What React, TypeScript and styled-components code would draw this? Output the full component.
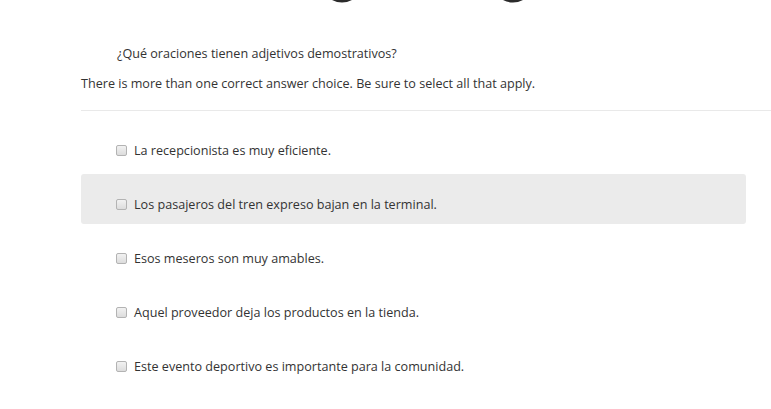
import React from 'react'
import styled, { createGlobalStyle } from 'styled-components'

const GlobalStyle = createGlobalStyle`
  body {
    margin: 0;
    background: #fff;
    font-family: 'Open Sans', 'Liberation Sans', sans-serif;
    color: #333;
  }
`

const Page = styled.div`
	width: 771px;
	height: 409px;
	overflow: hidden;
`

const Banner = styled.div`
	display: flex;
	gap: 151px;
	padding-left: 332px;
	height: 3px;
	overflow: hidden;
`

const Arc = styled.svg`
	display: block;
	width: 20px;
	height: 3px;
`

const Question = styled.p`
	margin: 0;
	padding: 42px 0 0 117px;
	font-size: 12.6px;
	line-height: 18px;
`

const Instructions = styled.p`
	margin: 0;
	padding: 12px 0 0 81px;
	font-size: 12.6px;
	line-height: 18px;
`

const Divider = styled.hr`
	margin: 17px 0 0 81px;
	border: none;
	border-top: 1px solid #e9e9e9;
	height: 0;
`

const Options = styled.ul`
	list-style: none;
	margin: 9px 25px 0 81px;
	padding: 0;
	display: flex;
	flex-direction: column;
	gap: 4px;
`

const Option = styled.li<{ $active?: boolean }>`
	display: flex;
	align-items: center;
	gap: 7px;
	height: 50px;
	box-sizing: border-box;
	padding: 10px 0 0 35px;
	border-radius: 3px;
	background: ${p => (p.$active ? '#ebebeb' : 'transparent')};
	font-size: 12.6px;
`

const Box = styled.span`
	display: inline-block;
	width: 9px;
	height: 9px;
	border: 1px solid #b3b3b3;
	border-radius: 2px;
	background: linear-gradient(#f2f2f2, #dcdcdc);
	flex: 0 0 auto;
`

const options = [
	'La recepcionista es muy eficiente.',
	'Los pasajeros del tren expreso bajan en la terminal.',
	'Esos meseros son muy amables.',
	'Aquel proveedor deja los productos en la tienda.',
	'Este evento deportivo es importante para la comunidad.',
]

const App: React.FC = () => (
	<>
		<GlobalStyle />
		<Page>
			<Banner>
				{[0, 1].map(i => (
					<Arc key={i} viewBox='0 0 20 3'>
						<path d='M0 0 Q10 5 20 0 Z' fill='#2b2b2b' />
					</Arc>
				))}
			</Banner>
			<Question>¿Qué oraciones tienen adjetivos demostrativos?</Question>
			<Instructions>
				There is more than one correct answer choice. Be sure to select all that apply.
			</Instructions>
			<Divider />
			<Options>
				{options.map((text, i) => (
					<Option key={text} $active={i === 1}>
						<Box />
						{text}
					</Option>
				))}
			</Options>
		</Page>
	</>
)

export default App
